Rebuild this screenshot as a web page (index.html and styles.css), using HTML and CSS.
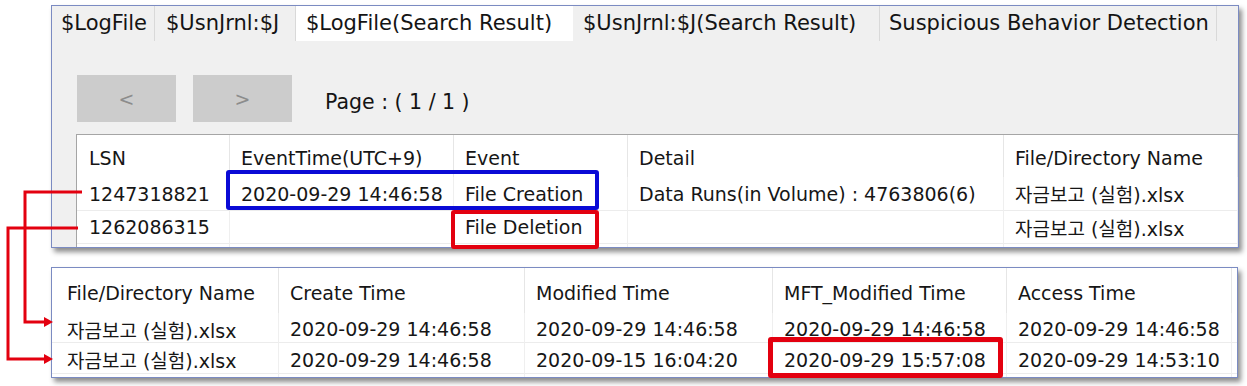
FILE: index.html
```html
<!DOCTYPE html>
<html lang="ko">
<head>
<meta charset="utf-8">
<title>LogFile Search Result</title>
<link rel="stylesheet" href="styles.css">
</head>
<body>
<div class="canvas">
  <section class="win win-top">
    <div class="tabs">
      <div class="tab t1">$LogFile</div>
      <div class="tab t2">$UsnJrnl:$J</div>
      <div class="tab t3 active">$LogFile(Search Result)</div>
      <div class="tab t4">$UsnJrnl:$J(Search Result)</div>
      <div class="tab t5">Suspicious Behavior Detection</div>
    </div>
    <div class="pane">
      <div class="toolbar">
        <button class="pg">&lt;</button>
        <button class="pg">&gt;</button>
        <span class="page">Page : ( 1 / 1 )</span>
      </div>
      <div class="list list-top">
        <div class="hd">LSN</div>
        <div class="hd">EventTime(UTC+9)</div>
        <div class="hd">Event</div>
        <div class="hd">Detail</div>
        <div class="hd">File/Directory Name</div>

        <div class="cell">1247318821</div>
        <div class="cell">2020-09-29 14:46:58</div>
        <div class="cell">File Creation</div>
        <div class="cell">Data Runs(in Volume) : 4763806(6)</div>
        <div class="cell">자금보고 (실험).xlsx</div>

        <div class="cell">1262086315</div>
        <div class="cell"></div>
        <div class="cell">File Deletion</div>
        <div class="cell"></div>
        <div class="cell">자금보고 (실험).xlsx</div>

        <div class="cell"></div>
        <div class="cell"></div>
        <div class="cell"></div>
        <div class="cell"></div>
        <div class="cell"></div>
      </div>
    </div>
  </section>

  <section class="win win-bottom">
    <div class="list list-bottom">
      <div class="hd">File/Directory Name</div>
      <div class="hd">Create Time</div>
      <div class="hd">Modified Time</div>
      <div class="hd">MFT_Modified Time</div>
      <div class="hd">Access Time</div>
      <div class="hd"></div>

      <div class="cell">자금보고 (실험).xlsx</div>
      <div class="cell">2020-09-29 14:46:58</div>
      <div class="cell">2020-09-29 14:46:58</div>
      <div class="cell">2020-09-29 14:46:58</div>
      <div class="cell">2020-09-29 14:46:58</div>
      <div class="cell"></div>

      <div class="cell">자금보고 (실험).xlsx</div>
      <div class="cell">2020-09-29 14:46:58</div>
      <div class="cell">2020-09-15 16:04:20</div>
      <div class="cell">2020-09-29 15:57:08</div>
      <div class="cell">2020-09-29 14:53:10</div>
      <div class="cell"></div>

      <div class="cell"></div>
      <div class="cell"></div>
      <div class="cell"></div>
      <div class="cell"></div>
      <div class="cell"></div>
      <div class="cell"></div>
    </div>
  </section>

  <div class="mark mark-blue"></div>
  <div class="mark mark-red1"></div>
  <div class="mark mark-red2"></div>

  <svg class="arrows" width="1247" height="386" viewBox="0 0 1247 386">
    <path d="M82 192 H25 V322 H45" fill="none" stroke="#e3000f" stroke-width="3"/>
    <polygon points="53,322 44,317 44,327" fill="#e3000f"/>
    <path d="M78 228 H8 V359 H45" fill="none" stroke="#e3000f" stroke-width="3"/>
    <polygon points="53,359 44,354 44,364" fill="#e3000f"/>
  </svg>
</div>
</body>
</html>
```

FILE: styles.css
```css
* { box-sizing: border-box; }

html, body {
  margin: 0;
  padding: 0;
  background: #ffffff;
}

body {
  font-family: "DejaVu Sans", "Noto Sans CJK KR", sans-serif;
  color: #161616;
}

.canvas {
  position: relative;
  width: 1247px;
  height: 386px;
  padding: 5px 0 0 51px;
  overflow: hidden;
}

/* windows */
.win {
  background: #f0f0f0;
  border: 1px solid #7b8bc2;
  box-shadow: 3px 4px 5px rgba(0, 0, 0, 0.45);
  overflow: hidden;
}

.win-top {
  width: 1188px;
  height: 243px;
}

.win-bottom {
  width: 1187px;
  height: 111px;
  margin-top: 19px;
  background: #ffffff;
}

/* tabs */
.tabs {
  display: flex;
  height: 35px;
}

.tab {
  display: flex;
  align-items: center;
  height: 35px;
  padding: 0 0 2px 9px;
  font-size: 21px;
  white-space: nowrap;
  border-right: 1px solid #d9d9d9;
  color: #141414;
}

.t1 { width: 103px; }
.t2 { width: 141px; padding-left: 11px; }
.t3 { width: 277px; padding-left: 10px; }
.t4 { width: 307px; padding-left: 10px; }
.t5 { width: 337px; padding-left: 9px; }

.tab.active {
  background: #ffffff;
  border-right-color: #ffffff;
}

/* toolbar */
.pane {
  padding: 34px 0 0 24px;
}

.toolbar {
  display: flex;
  align-items: center;
  height: 47px;
  margin-bottom: 12px;
}

.pg {
  width: 99px;
  height: 47px;
  margin: 0 17px 0 1px;
  border: none;
  background: #cccccc;
  color: #8c8c8c;
  font-family: "DejaVu Sans", sans-serif;
  font-size: 19px;
  padding: 0;
}

.pg + .pg {
  margin: 0 33px 0 0;
}

.page {
  font-size: 20.5px;
  padding-top: 6px;
  color: #141414;
}

/* lists */
.list {
  display: grid;
  background: #ffffff;
  font-size: 19px;
}

.list-top {
  grid-template-columns: 153px 224px 174px 376px 1fr;
  grid-template-rows: 42px 34px 33px 33px;
  border-top: 1px solid #a5a5a5;
  border-left: 1px solid #a5a5a5;
}

.list-bottom {
  grid-template-columns: 227px 246px 248px 234px 225px 1fr;
  grid-template-rows: 45px 30px 31px 31px;
}

.hd, .cell {
  display: flex;
  align-items: center;
  padding-left: 11px;
  white-space: nowrap;
  overflow: hidden;
}

.hd {
  padding-top: 4px;
  border-right: 1px solid #e6e6e6;
}

.cell {
  border-right: 1px solid #efefef;
  border-bottom: 1px solid #ececec;
}

.list-bottom .cell {
  padding-top: 3px;
}

.list-top .hd:first-child,
.list-top .cell:nth-child(5n+1) {
  padding-left: 12px;
}

.list-bottom .hd:first-child,
.list-bottom .cell:nth-child(6n+1) {
  padding-left: 15px;
}

/* annotation overlays */
.mark {
  position: absolute;
  border-radius: 3px;
}

.mark-blue {
  left: 226px;
  top: 170px;
  width: 373px;
  height: 40px;
  border: 4px solid #0a0ad6;
}

.mark-red1 {
  left: 451px;
  top: 210px;
  width: 148px;
  height: 39px;
  border: 4px solid #e3000f;
}

.mark-red2 {
  left: 768px;
  top: 337px;
  width: 235px;
  height: 41px;
  border: 5px solid #e3000f;
}

.arrows {
  position: absolute;
  left: 0;
  top: 0;
}
```
